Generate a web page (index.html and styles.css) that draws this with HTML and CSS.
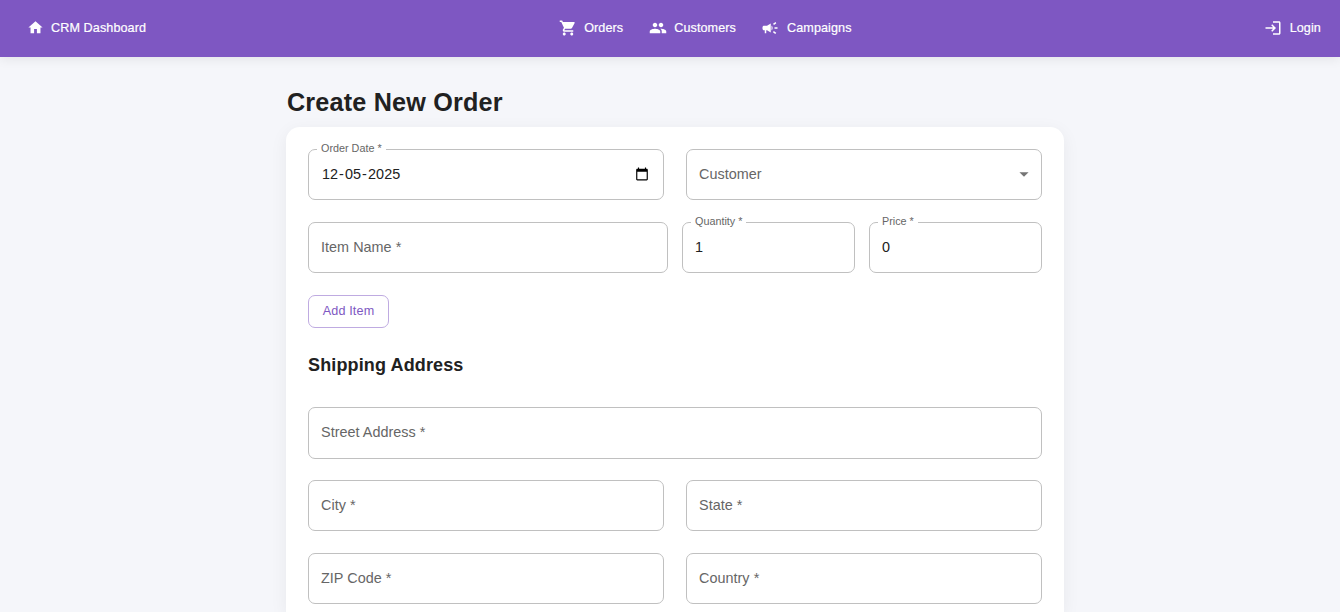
FILE: index.html
```html
<!DOCTYPE html>
<html lang="en">
<head>
<meta charset="utf-8">
<title>CRM Dashboard</title>
<link rel="stylesheet" href="styles.css">
</head>
<body>
<header class="navbar">
  <a class="nav-link brand"><svg class="icon icon-home" viewBox="0 0 24 24"><path d="M10 20v-6h4v6h5v-8h3L12 3 2 12h3v8z"/></svg>CRM Dashboard</a>
  <nav class="nav-center">
    <a class="nav-link"><svg class="icon icon-near" viewBox="0 0 24 24"><path d="M7 18c-1.1 0-1.99.9-1.99 2S5.900 22 7 22s2-.9 2-2-.9-2-2-2M1 2v2h2l3.600 7.590-1.350 2.450c-.16.28-.25.61-.25.96 0 1.100.9 2 2 2h12v-2H7.420c-.14 0-.25-.11-.25-.25l.03-.12.9-1.630h7.450c.75 0 1.410-.41 1.750-1.030l3.580-6.490c.08-.14.12-.31.12-.48 0-.55-.45-1-1-1H5.210l-.94-2zm16 16c-1.100 0-1.990.9-1.990 2s.89 2 1.990 2 2-.9 2-2-.9-2-2-2"/></svg>Orders</a>
    <a class="nav-link"><svg class="icon icon-near" viewBox="0 0 24 24"><path d="M16 11c1.660 0 2.990-1.340 2.990-3S17.660 5 16 5s-3 1.340-3 3 1.340 3 3 3m-8 0c1.660 0 2.990-1.340 2.990-3S9.660 5 8 5 5 6.340 5 8s1.340 3 3 3m0 2c-2.330 0-7 1.170-7 3.500V19h14v-2.500c0-2.330-4.670-3.500-7-3.500m8 0c-.29 0-.62.02-.97.05 1.160.84 1.970 1.970 1.970 3.450V19h6v-2.500c0-2.330-4.670-3.500-7-3.500"/></svg>Customers</a>
    <a class="nav-link"><svg class="icon" viewBox="0 0 24 24"><path d="M18 11v2h4v-2zm-2 6.610c.96.71 2.210 1.650 3.200 2.390.4-.53.8-1.070 1.200-1.600-.99-.74-2.240-1.680-3.200-2.400-.4.54-.8 1.080-1.200 1.610M20.400 5.600c-.4-.53-.8-1.070-1.200-1.600-.99.74-2.240 1.680-3.200 2.400.4.53.8 1.070 1.200 1.600.96-.72 2.210-1.650 3.200-2.400M4 9c-1.100 0-2 .9-2 2v2c0 1.100.9 2 2 2h1v4h2v-4h1l5 3V6L8 9zm11.500 3c0-1.330-.58-2.530-1.500-3.350v6.690c.92-.81 1.500-2.010 1.500-3.340"/></svg>Campaigns</a>
  </nav>
  <a class="nav-link login"><svg class="icon" viewBox="0 0 24 24"><path d="M11 7 9.600 8.400l2.600 2.600H2v2h10.200l-2.600 2.600L11 17l5-5zm9 12h-8v2h8c1.100 0 2-.9 2-2V5c0-1.100-.9-2-2-2h-8v2h8z"/></svg>Login</a>
</header>
<main class="page">
  <h1 class="page-title">Create New Order</h1>
  <form class="card">
    <div class="row row-half">
      <div class="field"><span class="float-label">Order Date *</span>
        <div class="value date"><span>12</span>-<span>05</span>-<span>2025</span></div>
        <svg class="calendar" viewBox="0 0 24 24"><path d="M20 3h-1V1h-2v2H7V1H5v2H4c-1.100 0-2 .9-2 2v16c0 1.100.9 2 2 2h16c1.100 0 2-.9 2-2V5c0-1.100-.9-2-2-2m0 18H4V8h16z"/></svg>
      </div>
      <div class="field"><span class="label">Customer</span>
        <svg class="arrow" viewBox="0 0 24 24"><path d="m7 10 5 5 5-5z"/></svg>
      </div>
    </div>
    <div class="row row-item">
      <div class="field"><span class="label">Item Name *</span></div>
      <div class="field"><span class="float-label">Quantity *</span><span class="value">1</span></div>
      <div class="field"><span class="float-label">Price *</span><span class="value">0</span></div>
    </div>
    <button class="add-item" type="button">Add Item</button>
    <h2 class="section-title">Shipping Address</h2>
    <div class="row street"><div class="field"><span class="label">Street Address *</span></div></div>
    <div class="row row-half">
      <div class="field"><span class="label">City *</span></div>
      <div class="field"><span class="label">State *</span></div>
    </div>
    <div class="row row-half">
      <div class="field"><span class="label">ZIP Code *</span></div>
      <div class="field"><span class="label">Country *</span></div>
    </div>
  </form>
</main>
</body>
</html>
```
FILE: styles.css
```css
* { box-sizing: border-box; }
body {
  margin: 0;
  height: 612px;
  overflow: hidden;
  background: #f5f6fa;
  color: #212121;
  font-family: "Liberation Sans", Arial, sans-serif;
}
.navbar {
  position: relative;
  display: flex;
  justify-content: space-between;
  align-items: center;
  height: 57px;
  padding: 0 19px 2px 27px;
  background: #7e57c2;
  box-shadow: 0 2px 11px rgba(0, 0, 0, 0.08);
}
.nav-link {
  display: flex;
  align-items: center;
  gap: 8px;
  color: #fff;
  font-size: 12.6px;
  font-weight: 500;
  letter-spacing: 0.1px;
  line-height: 22px;
  -webkit-text-stroke: 0.2px #fff;
}
.nav-center { display: flex; gap: 25px; }
.icon { width: 18px; height: 18px; fill: currentColor; stroke: none; }
.icon-near { margin: 0 -1px 0 1px; }
.icon-home { width: 17px; height: 17px; margin-right: -1px; }
.page { width: 778px; margin: 0 auto 0 286px; padding-top: 29px; }
.page-title {
  margin: 0 0 9px 1px;
  font-size: 25.2px;
  font-weight: 700;
  line-height: 32px;
  letter-spacing: 0.00735em;
}
.card {
  display: flex;
  flex-direction: column;
  gap: 22px;
  height: 485px;
  padding: 22px 22px 0;
  background: #fff;
  border-radius: 14px 14px 0 0;
  box-shadow: 0 4px 18px rgba(0, 0, 0, 0.06);
}
.row { display: grid; }
.row-half { grid-template-columns: 1fr 1fr; gap: 22px; }
.row-item { grid-template-columns: 360px 1fr 1fr; gap: 14px; }
.field {
  position: relative;
  display: flex;
  align-items: center;
  justify-content: space-between;
  height: 51px;
  padding: 0 12px 2px;
  border: 1px solid #c0c0c0;
  border-radius: 7px;
}
.street .field { height: 52px; }
.street { margin-bottom: -1px; }
.label, .value { font-size: 14.4px; line-height: 20px; }
.label { color: #666; letter-spacing: 0.03px; }
.date { display: flex; letter-spacing: 0.135px; }
.date span { padding: 0 0.9px; }
.float-label {
  position: absolute;
  left: 8px;
  top: -9px;
  padding: 0 4px;
  background: #fff;
  color: #666;
  font-size: 10.8px;
  line-height: 14px;
}
.calendar { width: 14px; height: 14px; margin-right: 2px; fill: #000; }
.arrow { width: 22px; height: 22px; margin-right: -6px; fill: #757575; }
.add-item {
  align-self: flex-start;
  width: 81px;
  height: 33px;
  padding: 0 0 2px;
  border: 1px solid #bfabe1;
  border-radius: 7px;
  background: #fff;
  color: #7e57c2;
  font: 500 12.6px/20px "Liberation Sans", Arial, sans-serif;
  letter-spacing: 0.15px;
}
.section-title {
  margin: 3px 0 8px;
  font-size: 18px;
  font-weight: 700;
  line-height: 24px;
  letter-spacing: 0.0075em;
}
```
